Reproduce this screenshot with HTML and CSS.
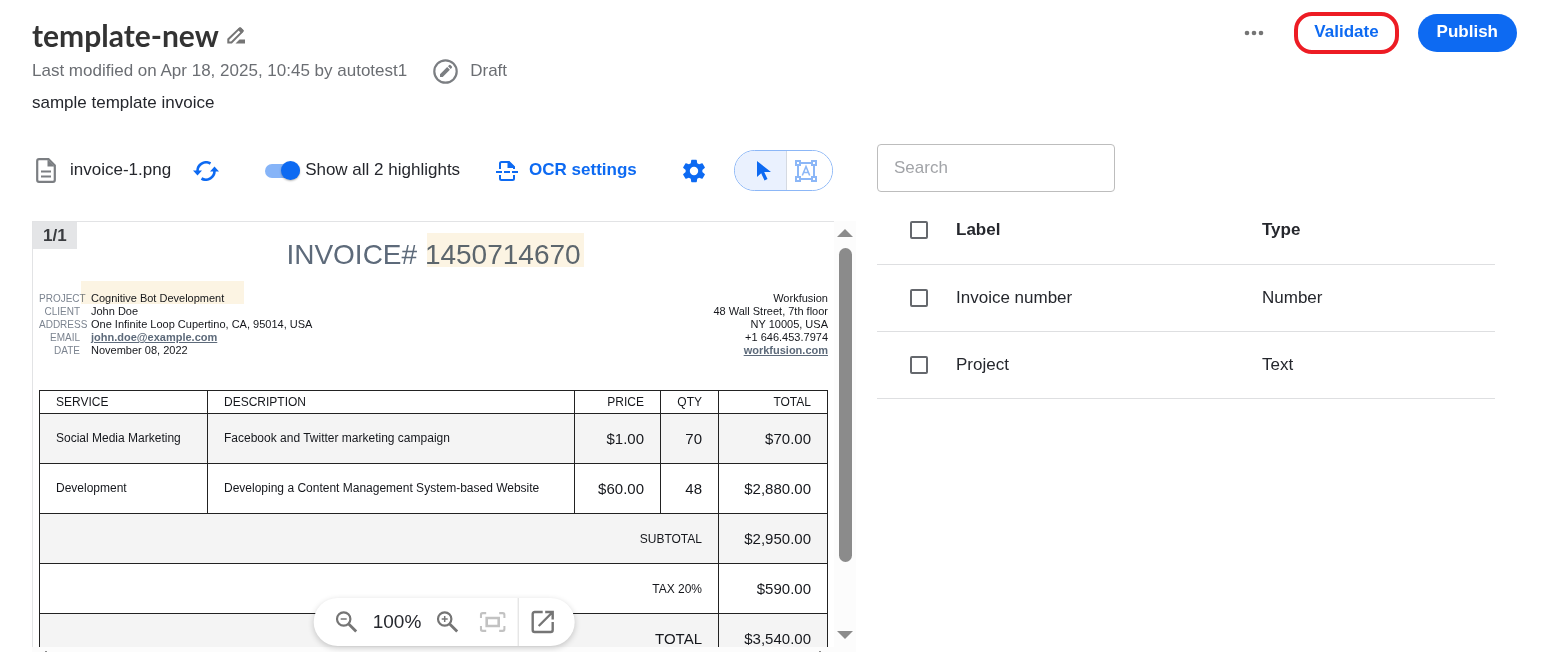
FILE: index.html
```html
<!DOCTYPE html>
<html lang="en">
<head>
    <meta charset="UTF-8">
    <title>template-new</title>
    <meta name="viewport" content="width=device-width, initial-scale=1">
    <link rel="stylesheet" href="styles.css">
</head>
<body>
    <header class="page-header">
        <div class="heading">
            <div class="title-row">
                <h1>template-new</h1>
                <button type="button" class="icon-btn" aria-label="Rename template">
                    <svg width="19" height="17" viewBox="0 0 19 17">
                        <path d="M1.300 15.500v-3.300L11.800 2.100q1-1 2 0l1 1q1 1 0 2L4.500 15.500z" fill="none" stroke="#757575" stroke-width="2"/>
                        <path d="M10.500 2.500l4 4 2-2q.7-.8 0-1.500l-2.500-2.500q-.7-.7-1.500 0z" fill="#757575"/>
                        <path d="M8.500 16.500l4-4H18v4z" fill="#757575"/>
                    </svg>
                </button>
            </div>
            <div class="meta-row">
                <span>Last modified on Apr 18, 2025, 10:45 by autotest1</span>
                <span class="status">
                    <svg width="25" height="25" viewBox="0 0 25 25">
                        <circle cx="12.500" cy="12.500" r="11.200" fill="none" stroke="#7b7e82" stroke-width="2.200"/>
                        <path d="M7 18v-2.700l7.200-7.200 2.700 2.700L9.700 18zM15 7.300l1.200-1.200q.6-.5 1.200 0l1.500 1.500q.5.6 0 1.200L17.700 10z" fill="#7b7e82"/>
                    </svg>
                    Draft
                </span>
            </div>
            <p class="description">sample template invoice</p>
        </div>
        <div class="actions">
            <button type="button" class="icon-btn" aria-label="More actions">
                <svg width="20" height="6" viewBox="0 0 20 6" fill="#757575">
                    <circle cx="3" cy="3" r="2.300"/><circle cx="10" cy="3" r="2.300"/><circle cx="17" cy="3" r="2.300"/>
                </svg>
            </button>
            <button type="button" class="btn btn-outline">Validate</button>
            <button type="button" class="btn btn-primary">Publish</button>
        </div>
    </header>

    <main class="workspace">
        <section class="document-panel">
            <div class="toolbar">
                <div class="file">
                    <svg width="20" height="25" viewBox="0 0 20 25">
                        <path d="M3 1.200h9.500l6.300 6.300V22q0 1.800-1.800 1.800H3q-1.800 0-1.800-1.800V3q0-1.800 1.800-1.800z" fill="none" stroke="#7b7e82" stroke-width="2.200"/>
                        <path d="M11.500 1.500v7h7z" fill="#7b7e82"/>
                        <path d="M5 13.500h10M5 18.500h10" stroke="#7b7e82" stroke-width="2.200"/>
                    </svg>
                    <span>invoice-1.png</span>
                    <button type="button" class="icon-btn" aria-label="Replace document">
                        <svg width="26" height="20" viewBox="0 0 26 20">
                            <path d="M4.500 10.500A8.700 8.700 0 0 1 17.500 2.500M21.500 9.500A8.700 8.700 0 0 1 8.500 17.500" fill="none" stroke="#0d6af2" stroke-width="2.600"/>
                            <path d="M0 9.500h9l-4.500 5zM17 10.500h9l-4.500-5z" fill="#0d6af2"/>
                        </svg>
                    </button>
                </div>
                <label class="switch">
                    <input type="checkbox" checked>
                    <span>Show all 2 highlights</span>
                </label>
                <button type="button" class="link-btn">
                    <svg width="22" height="22" viewBox="0 0 22 22">
                        <path d="M4 9V3.500Q4 2 5.500 2H13l5 5v2M4 15v3.500Q4 20 5.500 20h11q1.500 0 1.500-1.500V15" fill="none" stroke="#0d6af2" stroke-width="2"/>
                        <path d="M11.500 1.500v6.500H19V7.500L13 1.500zM0 11h6v2H0zM8 11h6v2H8zM16 11h6v2h-6z" fill="#0d6af2"/>
                    </svg>
                    <span>OCR settings</span>
                </button>
                <button type="button" class="icon-btn" aria-label="Settings">
                    <svg width="28" height="28" viewBox="0 0 24 24" fill="#0d6af2">
                        <path d="M19.140 12.940c.04-.3.060-.61.060-.94 0-.32-.02-.64-.07-.94l2.030-1.580c.18-.14.230-.41.120-.61l-1.920-3.320c-.12-.22-.37-.29-.59-.22l-2.390.96c-.5-.38-1.030-.7-1.620-.94l-.36-2.540c-.04-.24-.24-.41-.48-.41h-3.840c-.24 0-.43.170-.47.410l-.36 2.540c-.59.240-1.130.570-1.620.940l-2.390-.96c-.22-.08-.47 0-.59.220L2.740 8.870c-.12.210-.08.470.120.610l2.030 1.580c-.05.300-.09.630-.09.940s.02.640.070.940l-2.030 1.580c-.18.140-.23.410-.12.610l1.920 3.320c.12.220.37.290.59.220l2.390-.96c.5.380 1.030.700 1.620.940l.36 2.540c.05.240.24.410.48.410h3.840c.24 0 .44-.17.470-.41l.36-2.540c.59-.24 1.130-.56 1.620-.94l2.390.96c.22.080.47 0 .59-.22l1.920-3.320c.12-.22.070-.47-.12-.61l-2.010-1.580zM12 15.600a3.600 3.600 0 1 1 0-7.200 3.600 3.600 0 0 1 0 7.200z"/>
                    </svg>
                </button>
                <div class="mode-toggle">
                    <button type="button" class="mode active" aria-label="Select">
                        <svg width="16" height="20" viewBox="0 0 16 20" fill="#0d6af2">
                            <path d="M1 0v16l4.200-3.800 3.300 7.300 3-1.400-3.300-7H15z"/>
                        </svg>
                    </button>
                    <button type="button" class="mode" aria-label="Draw text area">
                        <svg width="22" height="22" viewBox="0 0 22 22" fill="none" stroke="#8cb7f7" stroke-width="2">
                            <path d="M5 3h12M5 19h12M3 5v12M19 5v12"/>
                            <path d="M1 1h4v4H1zM17 1h4v4h-4zM1 17h4v4H1zM17 17h4v4h-4z" fill="#fff"/>
                            <path d="M7.300 15.500L11 6.500l3.700 9M8.500 12.500h5" stroke-width="1.600"/>
                        </svg>
                    </button>
                </div>
            </div>

            <div class="viewer">
                <div class="viewer-body">
                    <div class="invoice">
                        <span class="page-count">1/1</span>
                        <div class="invoice-title">INVOICE# <span class="hl hl-number">1450714670</span></div>
                        <div class="parties">
                            <dl class="client">
                                <dt>PROJECT</dt><dd><span class="hl hl-project">Cognitive Bot Development</span></dd>
                                <dt>CLIENT</dt><dd>John Doe</dd>
                                <dt>ADDRESS</dt><dd>One Infinite Loop Cupertino, CA, 95014, USA</dd>
                                <dt>EMAIL</dt><dd><a href="mailto:john.doe@example.com">john.doe@example.com</a></dd>
                                <dt>DATE</dt><dd>November 08, 2022</dd>
                            </dl>
                            <address class="company">
                                Workfusion<br>
                                48 Wall Street, 7th floor<br>
                                NY 10005, USA<br>
                                +1 646.453.7974<br>
                                <a href="#">workfusion.com</a>
                            </address>
                        </div>
                        <table class="items">
                            <colgroup>
                                <col class="c-service"><col><col class="c-price"><col class="c-qty"><col class="c-total">
                            </colgroup>
                            <thead>
                                <tr><th>SERVICE</th><th>DESCRIPTION</th><th class="num">PRICE</th><th class="num">QTY</th><th class="num">TOTAL</th></tr>
                            </thead>
                            <tbody>
                                <tr><td>Social Media Marketing</td><td>Facebook and Twitter marketing campaign</td><td class="num">$1.00</td><td class="num">70</td><td class="num">$70.00</td></tr>
                                <tr><td>Development</td><td>Developing a Content Management System-based Website</td><td class="num">$60.00</td><td class="num">48</td><td class="num">$2,880.00</td></tr>
                                <tr><td colspan="4" class="sum">SUBTOTAL</td><td class="num">$2,950.00</td></tr>
                                <tr><td colspan="4" class="sum">TAX 20%</td><td class="num">$590.00</td></tr>
                                <tr><td colspan="4" class="num">TOTAL</td><td class="num">$3,540.00</td></tr>
                            </tbody>
                        </table>
                    </div>
                    <div class="scrollbar">
                        <span class="arrow-up"></span>
                        <span class="thumb"></span>
                        <span class="arrow-down"></span>
                    </div>
                </div>
                <div class="scrollbar-x"><span></span><span></span></div>
                <div class="zoom-bar">
                    <button type="button" class="icon-btn" aria-label="Zoom out">
                        <svg width="22" height="22" viewBox="0 0 22 22" fill="none" stroke="#757575">
                            <circle cx="8" cy="8" r="6.700" stroke-width="2.200"/>
                            <path d="M13 13l7.500 7.500" stroke-width="2.800"/>
                            <path d="M5 8h6" stroke-width="1.500"/>
                        </svg>
                    </button>
                    <span class="zoom-value">100%</span>
                    <button type="button" class="icon-btn" aria-label="Zoom in">
                        <svg width="22" height="22" viewBox="0 0 22 22" fill="none" stroke="#757575">
                            <circle cx="8" cy="8" r="6.700" stroke-width="2.200"/>
                            <path d="M13 13l7.500 7.500" stroke-width="2.800"/>
                            <path d="M5 8h6M8 5v6" stroke-width="1.500"/>
                        </svg>
                    </button>
                    <button type="button" class="icon-btn fit" aria-label="Fit to screen" disabled>
                        <svg width="26" height="20" viewBox="0 0 26 20" fill="none" stroke="#c2c2c2" stroke-width="2.200">
                            <path d="M1.200 6V3q0-1.800 1.800-1.800h3.500M19.500 1.200H23q1.800 0 1.800 1.800v3M24.800 14v3q0 1.800-1.800 1.800h-3.500M6.500 18.800H3q-1.800 0-1.800-1.800v-3"/>
                            <path d="M7 6h12v8H7z" stroke-width="2.600"/>
                        </svg>
                    </button>
                    <button type="button" class="icon-btn open" aria-label="Open in new window">
                        <svg width="24" height="24" viewBox="0 0 24 24" fill="none" stroke="#757575" stroke-width="2.400">
                            <path d="M12 2H4q-2 0-2 2v16q0 2 2 2h16q2 0 2-2v-8"/>
                            <path d="M8 16L22 2M14.500 2H22v7.500"/>
                        </svg>
                    </button>
                </div>
            </div>
        </section>

        <section class="labels-panel">
            <input type="text" class="search" placeholder="Search" aria-label="Search">
            <table class="labels">
                <thead>
                    <tr><th class="check"><input type="checkbox" aria-label="Select all"></th><th>Label</th><th class="type">Type</th></tr>
                </thead>
                <tbody>
                    <tr><td class="check"><input type="checkbox" aria-label="Select Invoice number"></td><td>Invoice number</td><td>Number</td></tr>
                    <tr><td class="check"><input type="checkbox" aria-label="Select Project"></td><td>Project</td><td>Text</td></tr>
                </tbody>
            </table>
        </section>
    </main>
</body>
</html>
```
FILE: styles.css
```css
* { box-sizing: border-box; }
body {
    margin: 0; height: 100vh; overflow: hidden; display: flex; flex-direction: column;
    font: 17px/24px "Liberation Sans", Arial, sans-serif; color: #25272d; background: #fff;
}
button { font: inherit; cursor: pointer; }
svg { display: block; flex: none; }
.icon-btn { display: flex; padding: 0; border: none; background: none; }

/* header */
.page-header { display: flex; justify-content: space-between; padding: 12px 26px 0 32px; height: 144px; flex: none; }
.title-row { display: flex; align-items: center; gap: 8px; height: 46px; }
h1 { margin: 0; font: 700 30px/32px Lato, sans-serif; color: #333; }
.meta-row { display: flex; align-items: center; gap: 26px; height: 26px; color: #6b6e73; }
.status { display: flex; align-items: center; gap: 12px; }
.description { margin: 7px 0 0; }
.actions { display: flex; align-items: center; height: 42px; }
.btn { font-weight: bold; height: 38px; padding: 0 19px 2px; border-radius: 19px; border: none; }
.btn-outline { height: 42px; margin: 0 19px 0 30px; padding: 0 16px 2px; background: #fff; color: #0d6af2; border: 4px solid #ed1c24; border-radius: 18px; }
.btn-primary { background: #0d6af2; color: #fff; }

/* layout */
.workspace { flex: 1; min-height: 0; display: grid; grid-template-columns: 4fr 3fr; gap: 21px; padding: 0 48px 0 32px; }
.document-panel { display: flex; flex-direction: column; min-height: 0; }

/* toolbar */
.toolbar { display: flex; align-items: center; height: 53px; margin: 0 23px 24px 4px; flex: none; }
.toolbar span { padding-bottom: 2px; }
.file { display: flex; align-items: center; gap: 14px; margin-right: 46px; }
.file .icon-btn { margin-left: 8px; }
.switch { display: flex; align-items: center; gap: 5px; margin-right: 36px; }
.switch input { appearance: none; position: relative; width: 35px; height: 14px; margin: 0; border-radius: 7px; background: #86b4f8; }
.switch input::after {
    content: ""; position: absolute; right: 0; top: -3px; width: 19px; height: 19px;
    border-radius: 50%; background: #0d6af2; box-shadow: 0 1px 2px rgba(0, 0, 0, 0.3);
}
.link-btn { display: flex; align-items: center; gap: 11px; margin-right: 43px; padding: 0; border: none; background: none; color: #0d6af2; font-weight: bold; }
.mode-toggle { display: flex; width: 99px; height: 41px; margin-left: auto; border: 1px solid #8cb7f7; border-radius: 21px; overflow: hidden; }
.mode { flex: 1; display: flex; align-items: center; padding: 0 8px; border: none; background: #fff; }
.mode.active { flex: none; width: 52px; padding-left: 21px; background: #eaf1fe; border-right: 1px solid #d5dae2; }

/* document viewer */
.viewer { position: relative; flex: 1; min-height: 0; display: flex; flex-direction: column; }
.viewer-body { flex: 1; min-height: 0; display: flex; overflow: hidden; }
.invoice {
    position: relative; flex: 1; padding: 16px 6px 0; border: solid #e2e3e5; border-width: 1px 0 0 1px;
    font-size: 12px; line-height: 14px; color: #15171c;
}
.page-count { position: absolute; left: 0; top: 0; padding: 2px 10px; font: bold 17px/23px "Liberation Sans", Arial, sans-serif; background: #e4e5e7; color: #3a3c40; }
.invoice-title { text-align: center; font-size: 28px; line-height: 34px; color: #5d6a7a; }
.hl { position: relative; }
.hl::after { content: ""; position: absolute; background: #fcf4e3; mix-blend-mode: multiply; }
.hl-number::after { inset: -6px -3px 3px 2px; }
.hl-project::after { inset: -11px -20px 0 -10px; }
.parties { display: flex; justify-content: space-between; margin: 20px 0 33px; font-size: 11px; line-height: 13px; }
.client { display: grid; grid-template-columns: 41px auto; column-gap: 11px; margin: 0; }
.client dt { display: flex; justify-content: flex-end; font-size: 10px; color: #7c8490; }
.client dt:nth-of-type(odd) { justify-content: flex-start; }
.client dt:last-of-type { justify-content: flex-end; }
.client dd { margin: 0; }
.company { font-style: normal; text-align: right; }
.parties a { font-weight: bold; color: #5d6a7a; }
.items { width: 100%; table-layout: fixed; border-collapse: collapse; }
.c-service { width: 168px; }
.c-price { width: 86px; }
.c-qty { width: 58px; }
.c-total { width: 109px; }
.items th, .items td { border: 1px solid #222; padding: 0 16px 2px; text-align: left; font-weight: normal; }
.items th { height: 23px; padding-bottom: 0; }
.items td { height: 50px; }
.items .num, .items .sum { text-align: right; padding-bottom: 0; }
.items td.num { font-size: 15px; }
.items tbody tr:nth-child(odd) { background: #f4f4f4; }

.scrollbar { display: flex; flex-direction: column; align-items: center; width: 22px; padding: 8px 0; background: #fcfcfc; }
.arrow-up, .arrow-down { border: solid transparent; border-width: 0 8px; }
.arrow-up { border-bottom: 8px solid #8b8b8b; }
.arrow-down { border-top: 8px solid #8b8b8b; margin-top: auto; }
.thumb { width: 13px; height: 314px; margin-top: 11px; border-radius: 7px; background: #8b8b8b; }
.scrollbar-x { display: flex; justify-content: space-between; height: 5px; padding: 4px 35px 0 13px; background: #fcfcfc; }
.scrollbar-x span { width: 2px; background: #8b8b8b; }

.zoom-bar {
    position: absolute; left: 50%; bottom: 6px; transform: translateX(-50%);
    display: flex; align-items: center; height: 48px; padding: 0 20px 0 22px;
    border-radius: 24px; background: #fff; box-shadow: 0 2px 6px rgba(0, 0, 0, 0.2);
}
.zoom-value { margin: 0 15px; font-size: 19px; }
.fit { margin: 0 12px 0 21px; }
.open { height: 48px; align-items: center; padding-left: 12px; border-left: 1px solid #dcdcdc; }

/* labels */
.search { display: block; width: 238px; height: 48px; padding: 0 16px; border: 1px solid #bdbdbd; border-radius: 4px; font: inherit; }
.search::placeholder { color: #a2a4a8; }
.labels { width: 100%; margin-top: 5px; table-layout: fixed; border-collapse: collapse; }
.labels th, .labels td { height: 67px; padding: 0; text-align: left; border-bottom: 1px solid #dedfe1; }
.labels th:last-child { width: 233px; }
.labels .check { width: 79px; padding-left: 33px; }
.labels input { appearance: none; display: block; width: 18px; height: 18px; margin: 0; border: 2px solid #65686d; border-radius: 2px; background: #fff; }
```
